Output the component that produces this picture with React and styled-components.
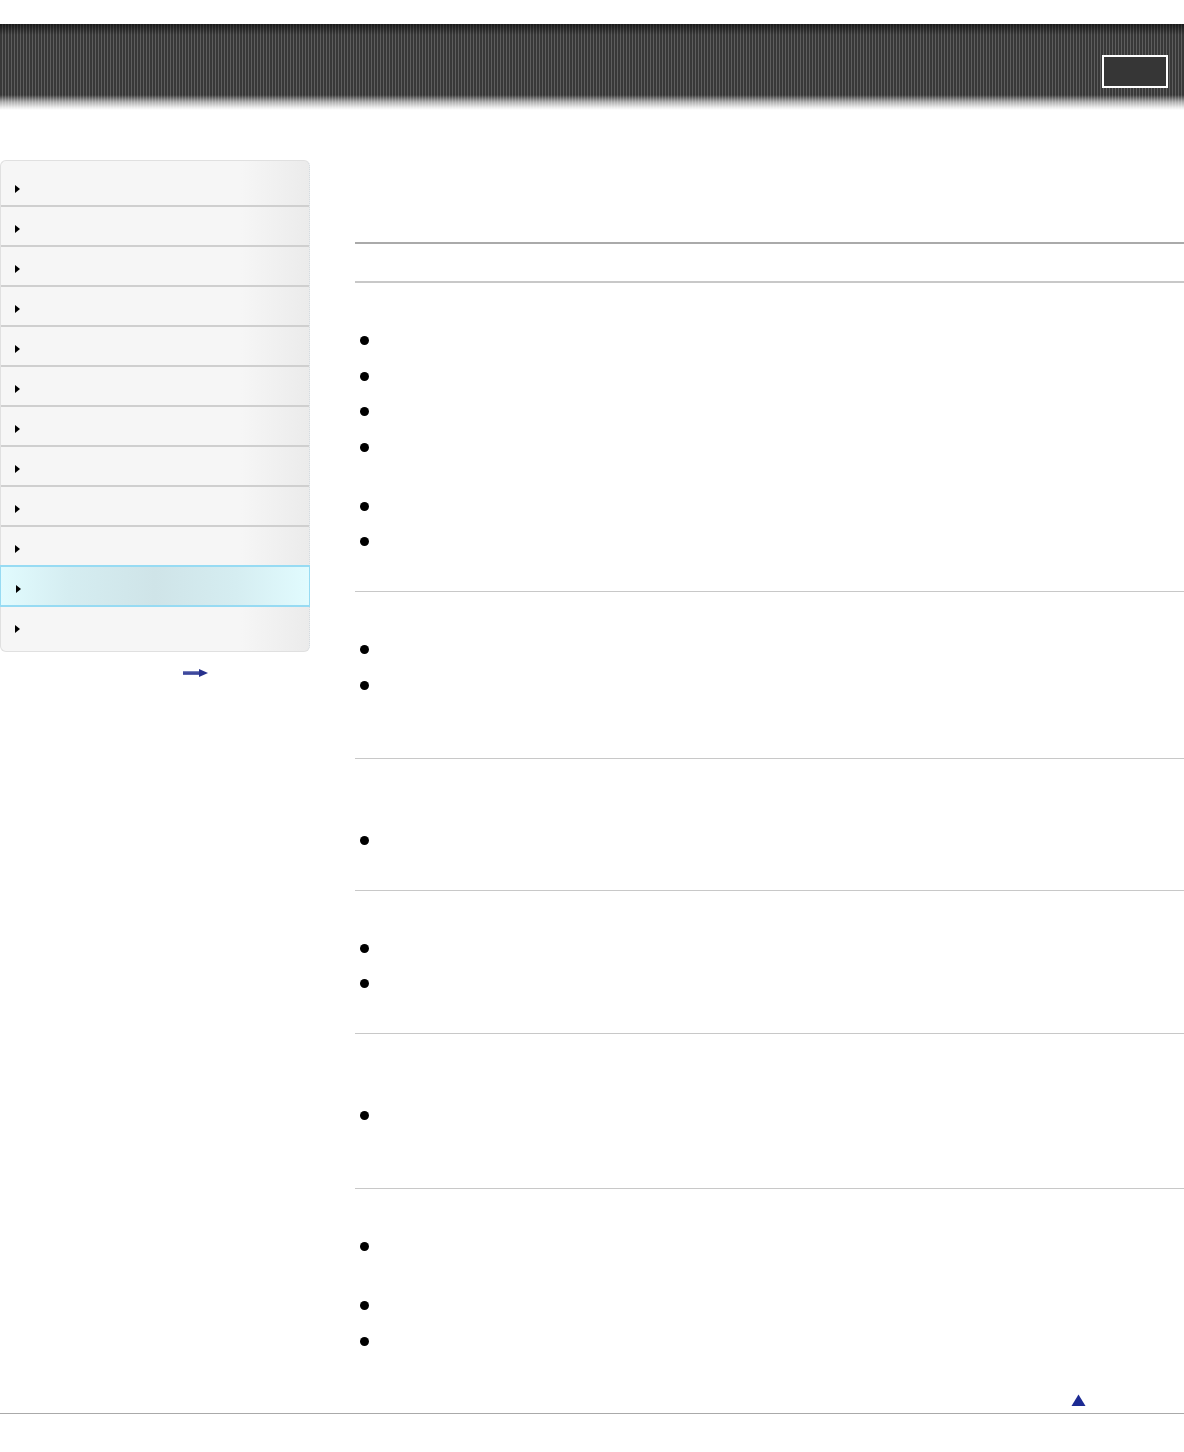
import React from "react";
import styled, { createGlobalStyle } from "styled-components";

const GlobalStyle = createGlobalStyle`
  html, body { margin: 0; padding: 0; background: #fff; }
  body { font-family: "Liberation Sans", Arial, sans-serif; color: #000; }
  *, *::before, *::after { box-sizing: border-box; }
  ul { margin: 0; padding: 0; list-style: none; }
`;

const Page = styled.div`
  width: 1184px;
  padding-top: 24px;
`;

const Header = styled.header`
  height: 86px;
  display: flex;
  justify-content: flex-end;
  align-items: flex-start;
  padding: 31px 16px 0 0;
  background:
    linear-gradient(180deg, rgba(0,0,0,0.55) 0px, rgba(0,0,0,0) 11px),
    linear-gradient(180deg, rgba(255,255,255,0) 0px, rgba(255,255,255,0) 71px, rgba(255,255,255,0.6) 78px, rgba(255,255,255,0.88) 83px, #fff 86px),
    repeating-linear-gradient(90deg, #383838 0px, #383838 2px, #5e5e5e 2px, #5e5e5e 3px);
`;

const HeaderButton = styled.button`
  width: 66px;
  height: 33px;
  border: 2px solid #fff;
  border-radius: 0;
  background: #363636;
  padding: 0;
  cursor: pointer;
`;

const Main = styled.div`
  display: flex;
  align-items: flex-start;
  gap: 45px;
  padding-top: 50px;
`;

const SideColumn = styled.aside`
  width: 310px;
  flex-shrink: 0;
`;

const Nav = styled.ul`
  border: 1px solid #e0e0e0;
  border-right: 1px dotted #c9d1d8;
  border-radius: 6px;
  background: linear-gradient(90deg, #f6f6f6 0%, #f6f6f6 78%, #ebebeb 100%);
`;

const NavRow = styled.li`
  display: flex;
  align-items: flex-start;
  height: ${(p) => p.$height}px;
  padding: ${(p) => p.$top}px 0 0 14px;
  border-bottom: ${(p) => (p.$last ? "none" : "2px solid #cfcfcf")};
  ${(p) =>
    p.$active &&
    `
    position: relative;
    margin: -2px -1px 0 -1px;
    height: ${p.$height + 2}px;
    padding: ${p.$top}px 0 0 15px;
    border: 2px solid #97dbf3;
    border-left-width: 1px;
    border-right-width: 1px;
    background: linear-gradient(90deg, #e1fbfe 0%, #d5edf1 22%, #cfe4e8 50%, #d5edf1 76%, #e1fbfe 100%);
  `}
`;

const NavMarker = styled.span`
  width: 0;
  height: 0;
  border-left: 5px solid #000;
  border-top: 4px solid transparent;
  border-bottom: 4px solid transparent;
`;

const MoreLink = styled.a`
  display: block;
  width: 25px;
  height: 8px;
  margin: 17px 0 0 183px;
`;

const Icon = styled.svg`
  display: block;
`;

const Content = styled.main`
  flex: 1;
  min-width: 0;
`;

const TitleArea = styled.div`
  height: 82px;
`;

const ThickRule = styled.div`
  height: 2px;
  background: #aaaaaa;
`;

const SubArea = styled.div`
  height: 37px;
`;

const Section = styled.section`
  border-top: ${(p) => (p.$first ? 2 : 1)}px solid #c8c8c8;
  padding-bottom: ${(p) => (p.$last ? 0 : 38)}px;
`;

const SectionHead = styled.div`
  height: ${(p) => 45.5 + (p.$lines - 1) * 23.5}px;
`;

const Items = styled.ul`
  display: flex;
  flex-direction: column;
  gap: 12px;
`;

const Item = styled.li`
  display: flex;
  align-items: flex-start;
  min-height: ${(p) => p.$lines * 23.5}px;
`;

const Bullet = styled.span`
  width: 9px;
  height: 9px;
  margin: 7.75px 0 0 5px;
  border-radius: 50%;
  background: #000;
  flex-shrink: 0;
`;

const BackTop = styled.div`
  display: flex;
  justify-content: flex-end;
  padding: 41px 98px 7.5px 0;
`;

const BackTopLink = styled.a`
  display: block;
  width: 15px;
  height: 12px;
`;

const FooterRule = styled.div`
  height: 1px;
  background: #aaaaaa;
`;

const navRows = [
  { h: 46, top: 24 },
  { h: 40, top: 18 },
  { h: 40, top: 18 },
  { h: 40, top: 18 },
  { h: 40, top: 18 },
  { h: 40, top: 18 },
  { h: 40, top: 18 },
  { h: 40, top: 18 },
  { h: 40, top: 18 },
  { h: 40, top: 18 },
  { h: 40, top: 18, active: true },
  { h: 44, top: 18, last: true },
];

const sections = [
  { head: 1, items: [1, 1, 1, 2, 1, 1] },
  { head: 1, items: [1, 2] },
  { head: 2, items: [1] },
  { head: 1, items: [1, 1] },
  { head: 2, items: [2] },
  { head: 1, items: [2, 1, 1] },
];

export default function App() {
  return (
    <>
      <GlobalStyle />
      <Page>
        <Header>
          <HeaderButton aria-label="menu" />
        </Header>
        <Main>
          <SideColumn>
            <Nav>
              {navRows.map((r, i) => (
                <NavRow key={i} $height={r.h} $top={r.top} $active={r.active} $last={r.last}>
                  <NavMarker />
                </NavRow>
              ))}
            </Nav>
            <MoreLink href="#" aria-label="more">
              <Icon width="25" height="8" viewBox="0 0 25 8">
                <defs>
                  <linearGradient id="shaft" x1="0" y1="0" x2="0" y2="1">
                    <stop offset="0" stopColor="#8e97c9" />
                    <stop offset="0.5" stopColor="#2b3592" />
                    <stop offset="1" stopColor="#6b74b5" />
                  </linearGradient>
                </defs>
                <rect x="0" y="2" width="17" height="4" fill="url(#shaft)" />
                <path d="M16 0 L25 4 L16 8 Z" fill="#27318d" />
              </Icon>
            </MoreLink>
          </SideColumn>
          <Content>
            <TitleArea />
            <ThickRule />
            <SubArea />
            {sections.map((s, i) => (
              <Section key={i} $first={i === 0} $last={i === sections.length - 1}>
                <SectionHead $lines={s.head} />
                <Items>
                  {s.items.map((l, j) => (
                    <Item key={j} $lines={l}>
                      <Bullet />
                    </Item>
                  ))}
                </Items>
              </Section>
            ))}
            <BackTop>
              <BackTopLink href="#" aria-label="top">
                <Icon width="15" height="12" viewBox="0 0 15 12">
                  <path d="M7.5 0.5 L14.5 12 L0.5 12 Z" fill="#1c2a93" />
                </Icon>
              </BackTopLink>
            </BackTop>
          </Content>
        </Main>
        <FooterRule />
      </Page>
    </>
  );
}
